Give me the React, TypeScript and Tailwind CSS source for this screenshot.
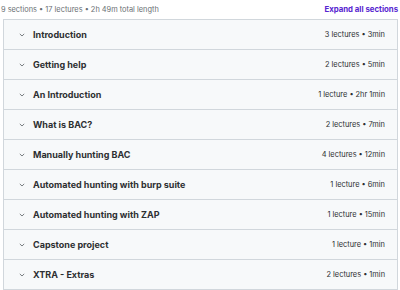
import React from "react";

interface Section {
	title: string;
	meta: string;
}

const sections: Section[] = [
	{ title: "Introduction", meta: "3 lectures • 3min" },
	{ title: "Getting help", meta: "2 lectures • 5min" },
	{ title: "An Introduction", meta: "1 lecture • 2hr 1min" },
	{ title: "What is BAC?", meta: "2 lectures • 7min" },
	{ title: "Manually hunting BAC", meta: "4 lectures • 12min" },
	{ title: "Automated hunting with burp suite", meta: "1 lecture • 6min" },
	{ title: "Automated hunting with ZAP", meta: "1 lecture • 15min" },
	{ title: "Capstone project", meta: "1 lecture • 1min" },
	{ title: "XTRA - Extras", meta: "2 lectures • 1min" },
];

const Chevron: React.FC = () => (
	<svg width="6" height="4" viewBox="0 0 6 4" fill="none" className="shrink-0">
		<path d="M0.8 0.9L3 3L5.2 0.9" stroke="#6a6f73" strokeWidth="0.9" />
	</svg>
);

const App: React.FC = () => {
	return (
		<div className="w-[400px] h-[290px] bg-white font-['Inter',sans-serif] overflow-hidden">
			<div className="flex items-center justify-between h-[19px] pl-[1px] pr-[2px]">
				<span className="text-[7.4px] text-[#6a6f73]">
					9 sections • 17 lectures • 2h 49m total length
				</span>
				<span className="text-[7.8px] font-bold text-[#5624d0]">Expand all sections</span>
			</div>
			<div className="ml-[3px] mr-[2px] border border-[#d1d7dc]">
				{sections.map((s, i) => (
					<div
						key={i}
						className={`flex items-center h-[29px] box-content bg-[#f7f9fa] pl-[15px] pr-[12px] ${
							i > 0 ? "border-t border-[#d1d7dc]" : ""
						}`}>
						<Chevron />
						<span className="ml-[8px] text-[9px] font-bold text-[#2d2f31]">{s.title}</span>
						<span className="ml-auto text-[7.4px] text-[#2d2f31]">{s.meta}</span>
					</div>
				))}
			</div>
		</div>
	);
};

export default App;
